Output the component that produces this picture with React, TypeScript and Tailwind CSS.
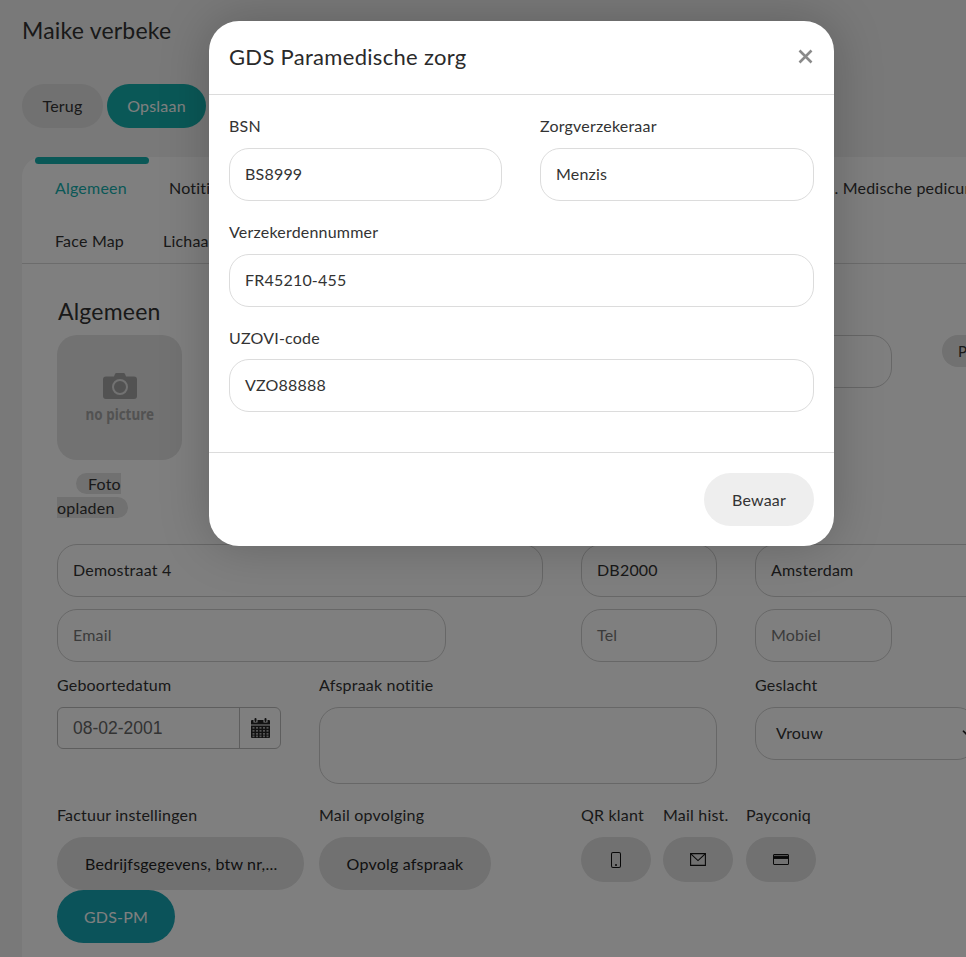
import { ChevronDown } from "lucide-react";
import { BsPhone } from "react-icons/bs";

const fieldClass =
  "flex h-[53px] items-center rounded-[20px] border border-[#cfcfcf] px-[15px] pb-[2px] text-[16px] text-[#333]";

function Field({ value, className = "", muted = false }: { value: string; className?: string; muted?: boolean }) {
  return <div className={`${fieldClass} ${muted ? "text-[#777]" : ""} ${className}`}>{value}</div>;
}

function ModalField({
  label,
  value,
  className = "",
  labelClass = "mb-[11px]",
}: {
  label: string;
  value: string;
  className?: string;
  labelClass?: string;
}) {
  return (
    <div className={className}>
      <div className={`h-[22px] text-[16px] leading-[22px] text-[#333] ${labelClass}`}>{label}</div>
      <div className="flex h-[53px] items-center rounded-[20px] border border-[#dcdcdc] px-[15px] pb-[2px] text-[16px] text-[#333]">
        {value}
      </div>
    </div>
  );
}

function IconButton({ label, icon, className = "" }: { label: string; icon: React.ReactNode; className?: string }) {
  return (
    <div className={className}>
      <div className="mb-[11px] h-[22px] text-[16px] leading-[22px] text-[#333]">{label}</div>
      <div className="flex h-[45px] w-[70px] items-center justify-center rounded-full bg-[#e2e2e2] text-[#111]">
        {icon}
      </div>
    </div>
  );
}

function CameraIcon() {
  return (
    <svg viewBox="0 0 34 26" className="h-[26px] w-[34px] text-[#a4a4a4]" fill="currentColor">
      <path d="M11 3.5l1-2.5a1.5 1.5 0 011.4-1h7.2A1.5 1.5 0 0122 1l1 2.5h8A3 3 0 0134 6.5v16.5a3 3 0 01-3 3H3a3 3 0 01-3-3V6.5a3 3 0 013-3z" />
      <circle cx="17" cy="14" r="7" fill="none" stroke="#e4e4e4" strokeWidth="2" />
    </svg>
  );
}

function CalendarIcon() {
  return (
    <svg viewBox="0 0 19 20" className="h-[20px] w-[19px] text-[#222]" fill="currentColor">
      <rect x="3.5" y="0" width="2" height="4" rx="1" />
      <rect x="13.5" y="0" width="2" height="4" rx="1" />
      <path d="M1 2h1.5v2.5h4V2h6v2.5h4V2H18a1 1 0 011 1v3.5H0V3a1 1 0 011-1z" />
      <path d="M0 7.5h19V19a1 1 0 01-1 1H1a1 1 0 01-1-1z" />
      <g fill="#a8a8a8">
        {[9, 12, 15, 17.5].map((y) =>
          [1.5, 5, 8.5, 12, 15.5].map((x) => <rect key={`${x}-${y}`} x={x} y={y} width="2" height="1.7" />)
        )}
      </g>
    </svg>
  );
}

function MailIcon() {
  return (
    <svg viewBox="0 0 16 13" className="h-[13px] w-[16px]" fill="none" stroke="currentColor" strokeWidth="1.1">
      <path d="M0.6 0.6h14.8v11.8H0.6z" />
      <path d="M0.8 0.8L8 7.6l7.2-6.8" />
    </svg>
  );
}

function CardIcon() {
  return (
    <svg viewBox="0 0 16 11" className="h-[11px] w-[16px]" fill="none" stroke="currentColor">
      <rect x="0.5" y="0.5" width="15" height="10" rx="0.5" />
      <rect x="0.5" y="2.2" width="15" height="2.2" fill="currentColor" />
    </svg>
  );
}

export default function App() {
  return (
    <div className="relative h-[957px] w-[966px] overflow-hidden bg-[#f2f2f2] font-[Lato,sans-serif] tracking-[0.2px]">
      {/* Page behind the dialog */}
      <div className="w-[1100px] pl-[22px] pt-[16px]">
        <h1 className="h-[28px] text-[23px] leading-[28px] text-[#333]">Maike verbeke</h1>

        <div className="mt-[40px] flex gap-[4px]">
          <button className="h-[44px] w-[81px] rounded-full bg-[#e2e2e2] pb-[1px] text-[16px] text-[#333]">Terug</button>
          <button className="h-[44px] w-[99px] rounded-full bg-[#14b0ae] pb-[1px] text-[16px] text-white">Opslaan</button>
        </div>

        {/* Card */}
        <div className="relative mt-[29px] h-[900px] rounded-tl-[20px] bg-white">
          <div className="absolute left-[13px] top-0 h-[7px] w-[114px] rounded-full bg-[#14b0ae]" />

          <div className="h-[107px] border-b border-[#d8d8d8] text-[16px] text-[#333]">
            <div className="flex h-[62px] items-center pl-[33px]">
              <span className="w-[114px] text-[#14b0ae]">Algemeen</span>
              <span className="w-[656px]">Notities</span>
              <span>1. Medische pedicure</span>
            </div>
            <div className="flex h-[44px] items-center pl-[33px]">
              <span className="w-[108px]">Face Map</span>
              <span>Lichaam</span>
            </div>
          </div>

          <div className="pl-[35px]">
            <h2 className="mt-[33px] ml-[1px] h-[28px] text-[23px] leading-[28px] text-[#333]">Algemeen</h2>

            <div className="mt-[10px] flex">
              <div className="w-[125px]">
                <div className="flex h-[125px] w-[125px] flex-col items-center justify-center rounded-[20px] bg-[#e4e4e4] text-[#a4a4a4]">
                  <CameraIcon />
                  <span className="mt-[5px] mb-[-2px] h-[20px] scale-x-[0.84] font-['Noto_Sans',sans-serif] text-[16px] leading-[20px] font-bold tracking-normal whitespace-nowrap">
                    no picture
                  </span>
                </div>
                <div className="mt-[12px] h-[48px] w-[90px] text-[16px] leading-[24px] text-[#333]">
                  <span className="ml-[19px] rounded-full bg-[#e2e2e2] py-[1px] pl-[12px] pr-[13px]">
                    Foto
                    <br />
                    opladen
                  </span>
                </div>
              </div>
              <div className="ml-[588px] flex h-[53px] w-[122px] rounded-[20px] border border-[#cfcfcf]" />
              <div className="ml-[50px] flex h-[32px] w-[60px] items-center rounded-full bg-[#e2e2e2] pl-[16px] text-[15px] text-[#333]">
                P
              </div>
            </div>

            <div className="mt-[24px] flex gap-[38px]">
              <Field value="Demostraat 4" className="w-[486px]" />
              <Field value="DB2000" className="w-[136px]" />
              <Field value="Amsterdam" className="w-[260px]" />
            </div>

            <div className="mt-[12px] flex">
              <Field value="Email" muted className="w-[389px]" />
              <Field value="Tel" muted className="ml-[135px] w-[136px]" />
              <Field value="Mobiel" muted className="ml-[38px] w-[137px]" />
            </div>

            <div className="mt-[12px] flex items-start">
              <div className="w-[262px]">
                <div className="mb-[11px] h-[22px] text-[16px] leading-[22px] text-[#333]">Geboortedatum</div>
                <div className="flex h-[42px] w-[224px] rounded-[6px] border border-[#bdbdbd]">
                  <div className="flex flex-1 items-center border-r border-[#bdbdbd] pl-[15px] font-['Liberation_Sans',sans-serif] text-[17.5px] tracking-normal text-[#666]">
                    08-02-2001
                  </div>
                  <div className="flex w-[40px] items-center justify-center">
                    <CalendarIcon />
                  </div>
                </div>
              </div>
              <div className="w-[436px]">
                <div className="mb-[11px] h-[22px] text-[16px] leading-[22px] text-[#333]">Afspraak notitie</div>
                <div className="h-[77px] w-[398px] rounded-[20px] border border-[#cfcfcf]" />
              </div>
              <div>
                <div className="mb-[11px] h-[22px] text-[16px] leading-[22px] text-[#333]">Geslacht</div>
                <div className="flex h-[53px] w-[222px] items-center justify-between rounded-[20px] border border-[#cfcfcf] pb-[2px] pl-[20px] pr-[2px] text-[16px] text-[#333]">
                  Vrouw
                  <ChevronDown className="h-[14px] w-[14px] text-[#222]" strokeWidth={3} />
                </div>
              </div>
            </div>

            <div className="mt-[20px] flex items-start">
              <div className="w-[262px]">
                <div className="mb-[11px] h-[22px] text-[16px] leading-[22px] text-[#333]">Factuur instellingen</div>
                <div className="flex h-[53px] w-[247px] items-center rounded-full bg-[#e2e2e2] pl-[28px] text-[16px] text-[#222]">
                  Bedrijfsgegevens, btw nr,...
                </div>
                <div className="flex h-[53px] w-[118px] items-center justify-center rounded-full bg-[#16a6b4] pt-[1px] text-[16px] text-white">
                  GDS-PM
                </div>
              </div>
              <div className="w-[262px]">
                <div className="mb-[11px] h-[22px] text-[16px] leading-[22px] text-[#333]">Mail opvolging</div>
                <div className="flex h-[53px] w-[172px] items-center justify-center rounded-full bg-[#e2e2e2] text-[16px] text-[#222]">
                  Opvolg afspraak
                </div>
              </div>
              <div className="flex">
                <IconButton label="QR klant" icon={<BsPhone className="text-[16px]" />} className="w-[82px]" />
                <IconButton label="Mail hist." icon={<MailIcon />} className="w-[83px]" />
                <IconButton label="Payconiq" icon={<CardIcon />} />
              </div>
            </div>
          </div>
        </div>
      </div>

      {/* Dialog backdrop */}
      <div className="absolute inset-0 bg-black/50" />

      {/* Dialog */}
      <div className="absolute left-[209px] top-[21px] w-[625px] rounded-[30px] bg-white text-[#333] shadow-[0_0_50px_rgba(0,0,0,0.22)]">
        <div className="flex h-[74px] items-center justify-between border-b border-[#dcdcdc] pb-[2px] pl-[20px] pr-[21px]">
          <h3 className="text-[22px] tracking-[0.3px] text-[#2a2a2a]">GDS Paramedische zorg</h3>
          <svg viewBox="0 0 15 15" className="h-[15px] w-[15px] text-[#8a8a8a]" fill="none" stroke="currentColor" strokeWidth="2.6">
            <path d="M1.5 1.5l12 12M13.5 1.5l-12 12" />
          </svg>
        </div>

        <div className="h-[358px] border-b border-[#dcdcdc] px-[20px] pt-[20px]">
          <div className="flex gap-[38px]">
            <ModalField label="BSN" value="BS8999" className="w-[273px]" />
            <ModalField label="Zorgverzekeraar" value="Menzis" className="w-[274px]" />
          </div>
          <ModalField label="Verzekerdennummer" value="FR45210-455" className="mt-[20px]" />
          <ModalField label="UZOVI-code" value="VZO88888" className="mt-[20px]" labelClass="mb-[10px]" />
        </div>

        <div className="flex h-[93px] items-center justify-end px-[20px]">
          <button className="h-[53px] w-[110px] rounded-full bg-[#eeeeee] text-[16px] text-[#333]">Bewaar</button>
        </div>
      </div>
    </div>
  );
}
